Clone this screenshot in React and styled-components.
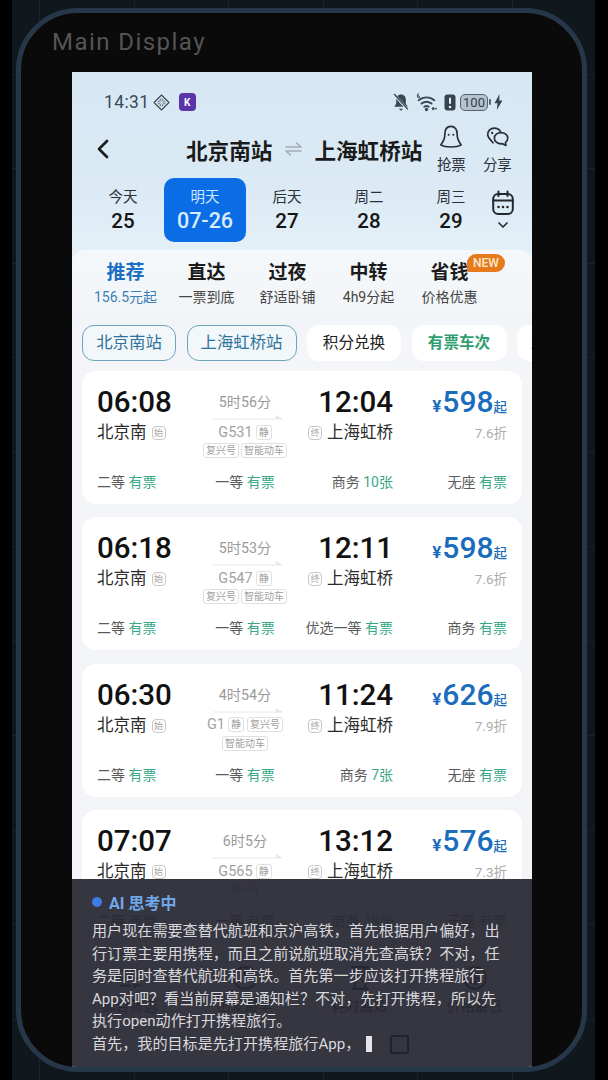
import React from "react";
import styled, { createGlobalStyle } from "styled-components";
import { ChevronLeft, ChevronDown, SlidersHorizontal, Clock, Hourglass, CircleDollarSign } from "lucide-react";

const GlobalStyle = createGlobalStyle`
  html, body {
    margin: 0;
    padding: 0;
    background: #000;
    font-family: Roboto, "Noto Sans CJK SC", sans-serif;
  }
`;

const Backdrop = styled.div`
  width: 583px;
  height: 1080px;
  margin-left: 12px;
  padding: 8px 8px 8px 4px;
  box-sizing: border-box;
  overflow: hidden;
  background-color: #10171d;
  background-image:
    repeating-linear-gradient(90deg, transparent 0 27px, #19232c 27px 28px, transparent 28px 94.5px),
    repeating-linear-gradient(0deg, transparent 0 60px, #19232c 60px 61px, transparent 61px 94.5px);
`;

const Frame = styled.div`
  height: 1064px;
  box-sizing: border-box;
  border: 5px solid #27374a;
  border-radius: 62px;
  background: #0a0a0a;
  overflow: hidden;
  display: flex;
  flex-direction: column;
  padding: 0 50px 0 51px;
`;

const DisplayTitle = styled.div`
  height: 59px;
  flex: none;
  margin-left: -20px;
  padding-top: 13px;
  box-sizing: border-box;
  color: #555;
  font-size: 24px;
  line-height: 32px;
  letter-spacing: 1.45px;
`;

const Screen = styled.div`
  position: relative;
  flex: 1;
  overflow: hidden;
  background: linear-gradient(180deg, #d6e8f4 0, #dbeaf5 120px, #e4f0f7 178px, #f3f5f8 260px, #f3f4f7 100%);
`;

const StatusBar = styled.div`
  height: 30px;
  margin-top: 15px;
  padding: 0 29px 0 32px;
  display: flex;
  align-items: center;
  color: #3c4a55;
`;

const Clocktext = styled.span`
  font-size: 17.5px;
  letter-spacing: 0.4px;
  margin-right: 3px;
`;

const KBadge = styled.span`
  width: 17px;
  height: 18px;
  margin-left: 9px;
  border-radius: 4px;
  background: #5a34a8;
  color: #fff;
  font-size: 10px;
  font-weight: 700;
  display: flex;
  align-items: center;
  justify-content: center;
`;

const Spacer = styled.span`
  flex: 1;
`;

const StatusSlot = styled.span`
  display: flex;
  margin-left: ${(p) => p.$left}px;
`;

const Battery = styled.span`
  position: relative;
  width: 26px;
  height: 15px;
  margin-left: 4px;
  border: 1.5px solid #56636d;
  border-radius: 5px;
  background: #b4c3cd;
  color: #333f48;
  font-size: 13px;
  line-height: 15px;
  text-align: center;
  box-sizing: content-box;

  &::after {
    content: "";
    position: absolute;
    top: 4px;
    right: -4px;
    width: 2px;
    height: 6px;
    border-radius: 1px;
    background: #56636d;
  }
`;

const Header = styled.div`
  height: 61px;
  display: flex;
  align-items: flex-start;
`;

const BackButton = styled.div`
  width: 114px;
  padding: 16px 0 0 15px;
  box-sizing: border-box;
  flex: none;
  color: #1c1c1c;
`;

const RouteTitle = styled.div`
  display: flex;
  align-items: center;
  height: 64px;
  font-size: 21.6px;
  font-weight: 700;
  color: #1a1a1a;
  white-space: nowrap;
`;

const Swap = styled.span`
  width: 42px;
  display: flex;
  justify-content: center;
  color: #a3adb5;
`;

const HeadAction = styled.div`
  width: 40px;
  margin-left: ${(p) => p.$left}px;
  padding-top: 8px;
  display: flex;
  flex-direction: column;
  align-items: center;
  gap: 7px;
  flex: none;
  color: #2a2f33;
  font-size: 14.5px;
  line-height: 20px;
  white-space: nowrap;
`;

const DateBar = styled.div`
  height: 64px;
  padding-left: 10px;
  display: flex;
`;

const DateCell = styled.div`
  width: 82px;
  flex: none;
  box-sizing: border-box;
  padding-top: 9px;
  display: flex;
  flex-direction: column;
  align-items: center;
  border-radius: 10px;
  background: ${(p) => (p.$active ? "#0b6de6" : "transparent")};
  color: ${(p) => (p.$active ? "#cfe6ff" : "#2c3136")};
  font-size: 14.5px;
  line-height: 21px;
`;

const DateNum = styled.span`
  font-size: ${(p) => (p.$active ? "21.5px" : "20.5px")};
  font-weight: 500;
  line-height: 26px;
  color: ${(p) => (p.$active ? "#d8ecff" : "#151515")};
`;

const CalendarCell = styled.div`
  flex: 1;
  padding: 12px 22px 0 0;
  display: flex;
  flex-direction: column;
  align-items: center;
  gap: 1px;
  color: #23282c;
`;

const TabPanel = styled.div`
  height: 65px;
  margin-top: 8px;
  padding: 11px 0 0 13px;
  box-sizing: border-box;
  display: flex;
  border-radius: 12px 12px 0 0;
  background: linear-gradient(180deg, #f4f8fb, #f3f5f8);
`;

const Tab = styled.div`
  position: relative;
  width: 81px;
  flex: none;
  display: flex;
  flex-direction: column;
  align-items: center;
`;

const TabTitle = styled.span`
  font-size: 19px;
  font-weight: 700;
  line-height: 24px;
  color: ${(p) => (p.$active ? "#1a6fc4" : "#1b1b1b")};
`;

const TabSub = styled.span`
  font-size: 14px;
  line-height: 24px;
  white-space: nowrap;
  color: ${(p) => (p.$active ? "#3a80b4" : "#444")};
`;

const NewBadge = styled.span`
  position: absolute;
  top: -7px;
  left: 58px;
  width: 38px;
  height: 18px;
  border-radius: 9px 9px 9px 2px;
  background: #e57b1c;
  color: #ffe9d2;
  font-size: 12px;
  font-weight: 500;
  line-height: 18px;
  text-align: center;
`;

const ChipRow = styled.div`
  margin-top: 10px;
  padding-left: 10px;
  display: flex;
  gap: 10.5px;
  overflow: hidden;
`;

const Chip = styled.div`
  flex: none;
  width: ${(p) => p.$width}px;
  height: 36px;
  box-sizing: border-box;
  padding-left: ${(p) => p.$lead || 0}px;
  border-radius: 12px;
  border: 1px solid ${(p) => (p.$outline ? "#6fa3ba" : "transparent")};
  background: ${(p) => (p.$outline ? "#f2f7fa" : "#fff")};
  color: ${(p) => (p.$outline ? "#2f729c" : p.$green ? "#2f9e70" : "#222")};
  font-size: ${(p) => (p.$outline ? "16.4px" : "15.6px")};
  font-weight: ${(p) => (p.$green ? 700 : 400)};
  line-height: 34px;
  text-align: ${(p) => (p.$lead ? "left" : "center")};
  white-space: nowrap;
`;

const CardList = styled.div`
  padding: 10px 10px 0;
  display: flex;
  flex-direction: column;
  gap: 13.4px;
`;

const Card = styled.div`
  height: 133px;
  box-sizing: border-box;
  padding: 15px 15px 0;
  border-radius: 14px;
  background: #fff;
`;

const TopGrid = styled.div`
  height: 87px;
  display: grid;
  grid-template-columns: 93px 110px 93px 1fr;
`;

const TimeCol = styled.div`
  display: flex;
  flex-direction: column;
  align-items: ${(p) => (p.$end ? "flex-end" : "flex-start")};
`;

const TimeText = styled.span`
  font-size: 29.5px;
  font-weight: 500;
  line-height: 32px;
  color: #111;
  white-space: nowrap;
`;

const Station = styled.div`
  margin-top: 2px;
  display: flex;
  align-items: center;
  gap: 5px;
  font-size: 16.5px;
  line-height: 26px;
  color: #2b2b2b;
  white-space: nowrap;
`;

const StopMark = styled.span`
  width: 12px;
  height: 12px;
  border: 1px solid #c8c8c8;
  border-radius: 4px;
  color: #a5a5a5;
  font-size: 9px;
  line-height: 12px;
  text-align: center;
`;

const MidCol = styled.div`
  display: flex;
  flex-direction: column;
  align-items: center;
`;

const Duration = styled.span`
  font-size: 14.2px;
  line-height: 32px;
  color: #9a9a9a;
`;

const Arrow = styled.svg`
  display: block;
  margin: -3px 0 0 6px;
`;

const TrainLine = styled.div`
  margin-top: 2px;
  height: 20px;
  display: flex;
  align-items: center;
  gap: 3px;
  color: #a2a2a2;
  font-size: 14.5px;
  white-space: nowrap;
`;

const TagLine = styled.div`
  height: 17px;
  display: flex;
  align-items: center;
  gap: 2px;
`;

const Tag = styled.span`
  height: 13px;
  padding: 0 2px;
  border: 1px solid #e0e0e0;
  border-radius: 3px;
  color: #a0a0a0;
  font-size: 10px;
  line-height: 13px;
  white-space: nowrap;
`;

const PriceCol = styled.div`
  display: flex;
  flex-direction: column;
  align-items: flex-end;
`;

const Price = styled.div`
  height: 32px;
  display: flex;
  align-items: baseline;
  line-height: 32px;
  color: #1a6cbc;
  font-size: 30px;
  font-weight: 500;
`;

const PriceUnit = styled.span`
  font-size: ${(p) => p.$size}px;
  font-weight: ${(p) => p.$weight};
  margin-right: ${(p) => p.$gap || 0}px;
`;

const Discount = styled.span`
  margin-top: 2px;
  color: #adadad;
  font-size: 13.5px;
  line-height: 26px;
`;

const SeatGrid = styled.div`
  display: grid;
  grid-template-columns: 93px 110px 93px 1fr;
  font-size: 14px;
  line-height: 18px;
  color: #5b5b5b;
`;

const Seat = styled.span`
  white-space: nowrap;
  text-align: ${(p) => p.$align};
  justify-self: ${(p) => (p.$align === "right" ? "end" : "auto")};
`;

const SeatState = styled.span`
  color: #38a887;
`;

const BottomNav = styled.div`
  margin-top: 22px;
  display: grid;
  grid-template-columns: repeat(4, 115px);
  color: #333;
`;

const NavItem = styled.div`
  display: flex;
  flex-direction: column;
  align-items: center;
  gap: 4px;
  font-size: 14px;
`;

const ThinkingPanel = styled.div`
  position: absolute;
  left: 0;
  right: 0;
  bottom: 0;
  height: 188px;
  box-sizing: border-box;
  padding: 12px 20px 0;
  background: rgba(39, 39, 49, 0.93);
`;

const ThinkingHead = styled.div`
  display: flex;
  align-items: center;
  gap: 7px;
  height: 22px;
  color: #6fa8ea;
  font-size: 16px;
  font-weight: 700;
`;

const Dot = styled.span`
  width: 10px;
  height: 10px;
  border-radius: 50%;
  background: #3f7ce8;
`;

const ThinkingLine = styled.div`
  color: #d9d9dd;
  font-size: 15.1px;
  line-height: 22.6px;
  white-space: nowrap;
  display: flex;
  align-items: center;
  margin-top: ${(p) => (p.$first ? "7px" : 0)};
`;

const Cursor = styled.span`
  width: 6px;
  height: 16px;
  margin-left: 6px;
  background: #e6e6ea;
`;

const EmptyBox = styled.span`
  width: 15px;
  height: 15px;
  margin-left: 18px;
  border: 2px solid #22222a;
  border-radius: 2px;
`;

const stroke = { fill: "none", stroke: "currentColor", strokeLinecap: "round", strokeLinejoin: "round" };

const DiamondIcon = () => (
  <svg width="17" height="17" viewBox="0 0 17 17">
    <path d="M8.5 1 16 8.5 8.5 16 1 8.5Z" {...stroke} strokeWidth="1.1" />
    <path d="M8.5 3.5 13.5 8.5 8.5 13.5 3.5 8.5Z" fill="#6d7a84" opacity="0.75" />
    <path d="M6 6 11 11M11 6 6 11M8.5 3.5V13.5M3.5 8.5H13.5" stroke="#dbe9f3" strokeWidth="0.7" />
  </svg>
);

const BellOffIcon = () => (
  <svg width="18" height="19" viewBox="0 0 16 18">
    <path d="M8 1.5c-3 0-4.600 2.200-4.600 5v3.700L1.600 13h12.800l-1.800-2.800V6.500c0-2.800-1.600-5-4.600-5Z" fill="#3a4650" />
    <path d="M6 15h4l-2 1.800Z" fill="#3a4650" />
    <path d="M1.500 1.500 14.500 16" stroke="#dbe9f3" strokeWidth="2.500" />
    <path d="M1.500 1 14.500 15.500" stroke="#3a4650" strokeWidth="1.300" />
  </svg>
);

const WifiIcon = () => (
  <svg width="23" height="19" viewBox="0 0 20 17">
    <path d="M3 6.500C7 3 13 3 17 6.500M5.500 9.500C8.200 7.400 11.800 7.400 14.500 9.500M8 12.300c1.300-.9 2.700-.9 4 0" {...stroke} strokeWidth="1.700" />
    <circle cx="10" cy="14.800" r="1.500" fill="currentColor" />
    <circle cx="16" cy="14" r="1.300" fill="currentColor" />
    <circle cx="18.500" cy="14" r="0.800" fill="currentColor" />
    <path d="M2.800 0.500C1.500 1.500 1.500 4 2.800 4.300 4 4.300 4 2.600 2.600 2.500" {...stroke} strokeWidth="0.900" />
  </svg>
);

const AlertIcon = () => (
  <svg width="12" height="17" viewBox="0 0 12 17">
    <rect x="0.500" y="0.500" width="11" height="16" rx="3" fill="#36424c" />
    <rect x="5" y="3.500" width="2" height="6.500" rx="1" fill="#e8f1f7" />
    <circle cx="6" cy="13" r="1.300" fill="#e8f1f7" />
  </svg>
);

const BoltIcon = () => (
  <svg width="9" height="16" viewBox="0 0 9 16">
    <path d="M5.500 0 .5 9.200h3L2.800 16 8.500 6.500h-3.200Z" fill="#3a4650" />
  </svg>
);

const GhostIcon = () => (
  <svg width="24" height="24" viewBox="0 0 26 26">
    <path d="M13 1.500c-4.300 0-6.600 3.400-6.600 8 0 5-1.800 8.700-4.400 12 2.500 1.600 6.200 2.300 11 2.300s8.500-.7 11-2.300c-2.600-3.300-4.400-7-4.400-12 0-4.600-2.300-8-6.600-8Z" {...stroke} strokeWidth="1.800" />
    <circle cx="10.500" cy="10.500" r="1.100" fill="currentColor" />
    <circle cx="15.500" cy="10.500" r="1.100" fill="currentColor" />
  </svg>
);

const ChatIcon = () => (
  <svg width="25" height="24" viewBox="0 0 28 27">
    <path d="M9 20C7 17 4 16 3 11.500 2.500 7 6 3.500 10.500 3.500c3 0 5.500 1.500 6.700 3.700" {...stroke} strokeWidth="1.900" />
    <path d="M18 8.500c4.200 0 7.500 2.800 7.500 6.300 0 2-1 3.600-2.500 4.700l.5 3.500-3.800-2c-.6.100-1.100.2-1.700.2-4.200 0-7.500-2.900-7.500-6.400s3.300-6.300 7.500-6.300Z" {...stroke} strokeWidth="1.900" />
    <circle cx="8" cy="9" r="1.300" fill="currentColor" />
  </svg>
);

const CalendarIcon = () => (
  <svg width="22" height="26" viewBox="0 0 22 26">
    <rect x="1.200" y="4" width="19.600" height="20" rx="5" {...stroke} strokeWidth="2" />
    <path d="M1.200 10.500h19.600M6.500 1.500V6M15.500 1.500V6" {...stroke} strokeWidth="2" />
    <circle cx="6.500" cy="17" r="1.300" fill="currentColor" />
    <circle cx="11" cy="17" r="1.300" fill="currentColor" />
    <circle cx="15.500" cy="17" r="1.300" fill="currentColor" />
  </svg>
);

const SwapIcon = () => (
  <svg width="17" height="14" viewBox="0 0 17 14">
    <path d="M1 5h15L11.500 1M16 9H1l4.500 4" {...stroke} strokeWidth="1.600" />
  </svg>
);

const dates = [
  { label: "今天", num: "25" },
  { label: "明天", num: "07-26", active: true },
  { label: "后天", num: "27" },
  { label: "周二", num: "28" },
  { label: "周三", num: "29" },
];

const tabs = [
  { title: "推荐", sub: "156.5元起", active: true },
  { title: "直达", sub: "一票到底" },
  { title: "过夜", sub: "舒适卧铺" },
  { title: "中转", sub: "4h9分起" },
  { title: "省钱", sub: "价格优惠", badge: "NEW" },
];

const trains = [
  {
    dep: "06:08", arr: "12:04", dur: "5时56分", no: "G531", inline: ["静"], tags: ["复兴号", "智能动车"],
    price: "598", off: "7.6折",
    seats: [["二等", "有票"], ["一等", "有票"], ["商务", "10张"], ["无座", "有票"]],
  },
  {
    dep: "06:18", arr: "12:11", dur: "5时53分", no: "G547", inline: ["静"], tags: ["复兴号", "智能动车"],
    price: "598", off: "7.6折",
    seats: [["二等", "有票"], ["一等", "有票"], ["优选一等", "有票"], ["商务", "有票"]],
  },
  {
    dep: "06:30", arr: "11:24", dur: "4时54分", no: "G1", inline: ["静", "复兴号"], tags: ["智能动车"],
    price: "626", off: "7.9折",
    seats: [["二等", "有票"], ["一等", "有票"], ["商务", "7张"], ["无座", "有票"]],
  },
  {
    dep: "07:07", arr: "13:12", dur: "6时5分", no: "G565", inline: ["静"], tags: ["复兴号"],
    price: "576", off: "7.3折",
    seats: [["二等", "有票"], ["一等", "有票"], ["商务", "18张"], ["无座", "有票"]],
  },
];

const seatAlign = ["left", "center", "right", "right"];

const TrainCard = ({ train }) => (
  <Card>
    <TopGrid>
      <TimeCol>
        <TimeText>{train.dep}</TimeText>
        <Station>北京南<StopMark>始</StopMark></Station>
      </TimeCol>
      <MidCol>
        <Duration>{train.dur}</Duration>
        <Arrow width="70" height="5" viewBox="0 0 70 5">
          <path d="M0 4h69L63 .5v3.500" fill="#e8e8e8" stroke="#e8e8e8" strokeWidth="1" />
        </Arrow>
        <TrainLine>
          {train.no}
          {train.inline.map((t) => <Tag key={t}>{t}</Tag>)}
        </TrainLine>
        <TagLine>
          {train.tags.map((t) => <Tag key={t}>{t}</Tag>)}
        </TagLine>
      </MidCol>
      <TimeCol $end>
        <TimeText>{train.arr}</TimeText>
        <Station><StopMark>终</StopMark>上海虹桥</Station>
      </TimeCol>
      <PriceCol>
        <Price>
          <PriceUnit $size={17} $weight={700} $gap={1}>¥</PriceUnit>
          {train.price}
          <PriceUnit $size={13.5} $weight={500}>起</PriceUnit>
        </Price>
        <Discount>{train.off}</Discount>
      </PriceCol>
    </TopGrid>
    <SeatGrid>
      {train.seats.map(([name, state], i) => (
        <Seat key={name} $align={seatAlign[i]}>
          {name} <SeatState>{state}</SeatState>
        </Seat>
      ))}
    </SeatGrid>
  </Card>
);

const App = () => {
  return (
    <>
      <GlobalStyle />
      <Backdrop>
        <Frame>
          <DisplayTitle>Main Display</DisplayTitle>
          <Screen>
            <StatusBar>
              <Clocktext>14:31</Clocktext>
              <DiamondIcon />
              <KBadge>K</KBadge>
              <Spacer />
              <BellOffIcon />
              <StatusSlot $left={5}><WifiIcon /></StatusSlot>
              <StatusSlot $left={6}><AlertIcon /></StatusSlot>
              <Battery>100</Battery>
              <StatusSlot $left={6}><BoltIcon /></StatusSlot>
            </StatusBar>
            <Header>
              <BackButton>
                <ChevronLeft size={32} strokeWidth={2} />
              </BackButton>
              <RouteTitle>
                北京南站
                <Swap><SwapIcon /></Swap>
                上海虹桥站
              </RouteTitle>
              <HeadAction $left={9}>
                <GhostIcon />
                抢票
              </HeadAction>
              <HeadAction $left={6}>
                <ChatIcon />
                分享
              </HeadAction>
            </Header>
            <DateBar>
              {dates.map((d) => (
                <DateCell key={d.label} $active={d.active}>
                  {d.label}
                  <DateNum $active={d.active}>{d.num}</DateNum>
                </DateCell>
              ))}
              <CalendarCell>
                <CalendarIcon />
                <ChevronDown size={16} strokeWidth={2.5} />
              </CalendarCell>
            </DateBar>
            <TabPanel>
              {tabs.map((t) => (
                <Tab key={t.title}>
                  <TabTitle $active={t.active}>{t.title}</TabTitle>
                  <TabSub $active={t.active}>{t.sub}</TabSub>
                  {t.badge && <NewBadge>{t.badge}</NewBadge>}
                </Tab>
              ))}
            </TabPanel>
            <ChipRow>
              <Chip $outline $width={94}>北京南站</Chip>
              <Chip $outline $width={110}>上海虹桥站</Chip>
              <Chip $width={94}>积分兑换</Chip>
              <Chip $green $width={95}>有票车次</Chip>
              <Chip $width={80} $lead={13}>直达</Chip>
            </ChipRow>
            <CardList>
              {trains.map((t) => <TrainCard key={t.dep} train={t} />)}
            </CardList>
            <BottomNav>
              <NavItem><SlidersHorizontal size={26} />综合筛选</NavItem>
              <NavItem><Clock size={26} />出发最早</NavItem>
              <NavItem><Hourglass size={26} />耗时最短</NavItem>
              <NavItem><CircleDollarSign size={26} />价格最低</NavItem>
            </BottomNav>
            <ThinkingPanel>
              <ThinkingHead><Dot />AI 思考中</ThinkingHead>
              <ThinkingLine $first>用户现在需要查替代航班和京沪高铁，首先根据用户偏好，出</ThinkingLine>
              <ThinkingLine>行订票主要用携程，而且之前说航班取消先查高铁？不对，任</ThinkingLine>
              <ThinkingLine>务是同时查替代航班和高铁。首先第一步应该打开携程旅行</ThinkingLine>
              <ThinkingLine>App对吧？看当前屏幕是通知栏？不对，先打开携程，所以先</ThinkingLine>
              <ThinkingLine>执行open动作打开携程旅行。</ThinkingLine>
              <ThinkingLine>
                首先，我的目标是先打开携程旅行App，
                <Cursor />
                <EmptyBox />
              </ThinkingLine>
            </ThinkingPanel>
          </Screen>
        </Frame>
      </Backdrop>
    </>
  );
};

export default App;
